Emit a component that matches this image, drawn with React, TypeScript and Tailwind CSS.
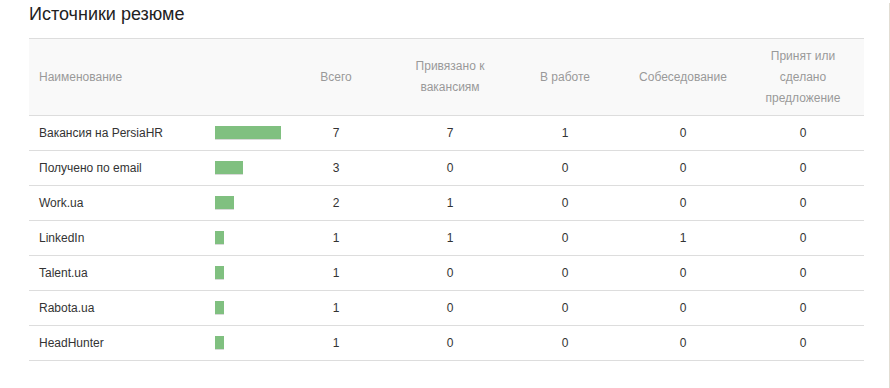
const rows = [
  { name: 'Вакансия на PersiaHR', total: 7, linked: 7, inWork: 1, interview: 0, offer: 0 },
  { name: 'Получено по email', total: 3, linked: 0, inWork: 0, interview: 0, offer: 0 },
  { name: 'Work.ua', total: 2, linked: 1, inWork: 0, interview: 0, offer: 0 },
  { name: 'LinkedIn', total: 1, linked: 1, inWork: 0, interview: 1, offer: 0 },
  { name: 'Talent.ua', total: 1, linked: 0, inWork: 0, interview: 0, offer: 0 },
  { name: 'Rabota.ua', total: 1, linked: 0, inWork: 0, interview: 0, offer: 0 },
  { name: 'HeadHunter', total: 1, linked: 0, inWork: 0, interview: 0, offer: 0 },
]

const maxTotal = Math.max(...rows.map((row) => row.total))

export default function App() {
  return (
    <div className="h-[388px] w-[890px] bg-[#f4f2ec] font-['Liberation_Sans',Arial,sans-serif]">
      <div className="h-[387px] w-[890px] border-b border-r border-[#e2ddd3] bg-white">
        <h2 className="ml-[29px] mt-[3px] text-[18px] leading-[22px] text-[#222]">
          Источники резюме
        </h2>

        <div className="ml-[29px] mt-[13px] w-[835px] text-[12px]">
          {/* header */}
          <div className="flex h-[78px] items-center border-y border-[#dddddd] bg-[#f9f9f9] leading-[21px] text-[#999]">
            <div className="w-[176px] pl-[10px]">Наименование</div>
            <div className="w-[85px]" />
            <div className="w-[92px] text-center">Всего</div>
            <div className="w-[136px] text-center">
              Привязано к<br />
              вакансиям
            </div>
            <div className="w-[94px] text-center">В работе</div>
            <div className="w-[142px] text-center">Собеседование</div>
            <div className="w-[98px] text-center">
              Принят или
              <br />
              сделано
              <br />
              предложение
            </div>
          </div>

          {rows.map((row) => (
            <div
              key={row.name}
              className="flex h-[35px] items-center border-b border-[#dddddd] text-[#333]"
            >
              <div className="w-[176px] pl-[10px]">{row.name}</div>
              <div className="w-[85px] pl-[10px]">
                <div
                  className="h-[14px] border-b border-[#d9d9d9] bg-[#80c080]"
                  style={{ width: Math.round((row.total / maxTotal) * 66) }}
                />
              </div>
              <div className="w-[92px] text-center">{row.total}</div>
              <div className="w-[136px] text-center">{row.linked}</div>
              <div className="w-[94px] text-center">{row.inWork}</div>
              <div className="w-[142px] text-center">{row.interview}</div>
              <div className="w-[98px] text-center">{row.offer}</div>
            </div>
          ))}
        </div>
      </div>
    </div>
  )
}
